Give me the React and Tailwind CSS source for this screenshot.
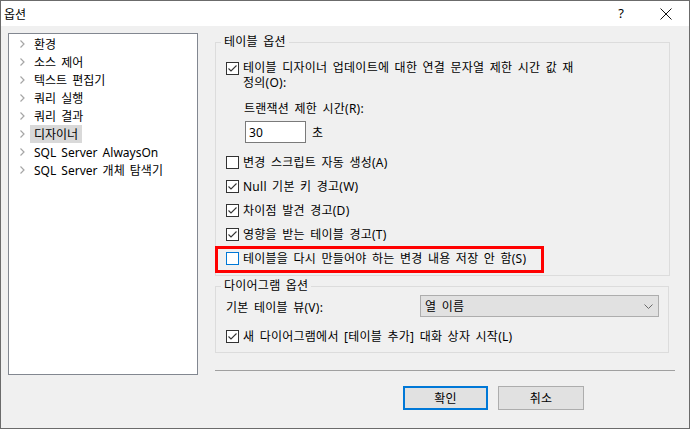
import React from 'react';

const font = { fontFamily: '"Noto Sans", "Noto Sans CJK KR", sans-serif' };

function Check({ checked, hover }) {
    return (
        <svg width="13" height="13" viewBox="0 0 13 13" className="shrink-0">
            <rect x="0.5" y="0.5" width="12" height="12" fill="#fff" stroke={hover ? '#0078d7' : '#333333'} />
            {checked && <polyline points="2.5,6.5 5,9 10.5,3.5" fill="none" stroke="#333333" strokeWidth="1.1" />}
        </svg>
    );
}

function CheckRow({ checked, label }) {
    return (
        <div className="flex items-center h-[24px] gap-[4px]">
            <Check checked={checked} />
            <span>{label}</span>
        </div>
    );
}

function Chevron() {
    return (
        <svg width="5" height="8" viewBox="0 0 5 8" className="shrink-0">
            <polyline points="0.5,0.5 4,4 0.5,7.5" fill="none" stroke="#a6a6a6" strokeWidth="1.2" />
        </svg>
    );
}

const treeItems = ['환경', '소스 제어', '텍스트 편집기', '쿼리 실행', '쿼리 결과', '디자이너', 'SQL Server AlwaysOn', 'SQL Server 개체 탐색기'];

export default function App() {
    return (
        <div className="w-[690px] h-[429px] bg-[#f0f0f0] border border-[#6b6b6b] text-[12px] leading-[15px] [word-spacing:2px] text-black flex flex-col overflow-hidden" style={font}>
            {/* Title bar */}
            <div className="h-[25px] bg-white flex items-center shrink-0">
                <span className="pl-[3px] pt-[1px]">옵션</span>
                <span className="ml-auto w-[20px] text-center text-[13px] mr-[29px]">?</span>
                <svg width="12" height="12" viewBox="0 0 12 12" className="mr-[17px]">
                    <path d="M0.5 0.5L11.5 11.5M11.5 0.5L0.5 11.5" stroke="#111" strokeWidth="1" />
                </svg>
            </div>

            <div className="flex pt-[7px] pl-[7px]">
                {/* Tree */}
                <div className="w-[190px] h-[342px] bg-white border border-[#828790] pt-[1px] shrink-0">
                    {treeItems.map((t, i) => (
                        <div key={t} className="h-[18px] flex items-center pl-[11px]">
                            <Chevron />
                            <span className={`ml-[5px] px-[4px] h-[18px] flex items-center ${i === 5 ? 'bg-[#d9d9d9]' : ''}`}>{t}</span>
                        </div>
                    ))}
                </div>

                {/* Right column */}
                <div className="ml-[17px] w-[460px] flex flex-col tracking-[0.25px]">
                    <fieldset className="w-[455px] border border-[#dcdcdc] pl-[10px] pt-[10px] pb-[2px] mt-[1px]">
                        <legend className="ml-[-5px] px-[3px] leading-[16px]">테이블 옵션</legend>
                        <div className="flex items-start gap-[4px]">
                            <div className="mt-[2px]"><Check checked /></div>
                            <span>테이블 디자이너 업데이트에 대한 연결 문자열 제한 시간 값 재<br />정의(O):</span>
                        </div>
                        <div className="ml-[18px] mt-[11px]">트랜잭션 제한 시간(R):</div>
                        <div className="ml-[19px] mt-[5px] flex items-center">
                            <div className="w-[61px] h-[22px] bg-white border border-[#7a7a7a] flex items-center pl-[3px]">30</div>
                            <span className="ml-[6px]">초</span>
                        </div>
                        <div className="mt-[7px]">
                            <CheckRow label="변경 스크립트 자동 생성(A)" />
                            <CheckRow checked label="Null 기본 키 경고(W)" />
                            <CheckRow checked label="차이점 발견 경고(D)" />
                            <CheckRow checked label="영향을 받는 테이블 경고(T)" />
                        </div>
                        <div className="ml-[-11px] w-[329px] h-[27px] border-[3px] border-[#ff0000] pl-[8px] pb-[2px] flex items-center gap-[4px]">
                            <Check hover />
                            <span>테이블을 다시 만들어야 하는 변경 내용 저장 안 함(S)</span>
                        </div>
                    </fieldset>

                    <fieldset className="w-[454px] border border-[#dcdcdc] pl-[10px] pr-[9px] pt-[1px] pb-[4px] mt-[2px]">
                        <legend className="ml-[-5px] px-[3px] leading-[16px]">다이어그램 옵션</legend>
                        <div className="flex items-center h-[22px]">
                            <span className="pt-[3px]">기본 테이블 뷰(V):</span>
                            <div className="ml-auto w-[239px] h-[22px] bg-[#e1e1e1] border border-[#adadad] flex items-center pl-[4px] pr-[5px]">
                                <span>열 이름</span>
                                <svg width="9" height="5" viewBox="0 0 9 5" className="ml-auto">
                                    <polyline points="0.5,0.5 4.5,4.5 8.5,0.5" fill="none" stroke="#6a6a6a" strokeWidth="1" />
                                </svg>
                            </div>
                        </div>
                        <div className="mt-[7px]">
                            <CheckRow checked label="새 다이어그램에서 [테이블 추가] 대화 상자 시작(L)" />
                        </div>
                    </fieldset>

                    <div className="mt-[17px] h-[1px] w-[460px] bg-[#a0a0a0]" />

                    <div className="flex mt-[15px] ml-[188px] gap-[10px]">
                        <button className="w-[85px] h-[24px] bg-[#e1e1e1] border-2 border-[#0078d7] flex items-center justify-center">확인</button>
                        <button className="w-[86px] h-[24px] bg-[#e1e1e1] border border-[#adadad] flex items-center justify-center">취소</button>
                    </div>
                </div>
            </div>
        </div>
    );
}
